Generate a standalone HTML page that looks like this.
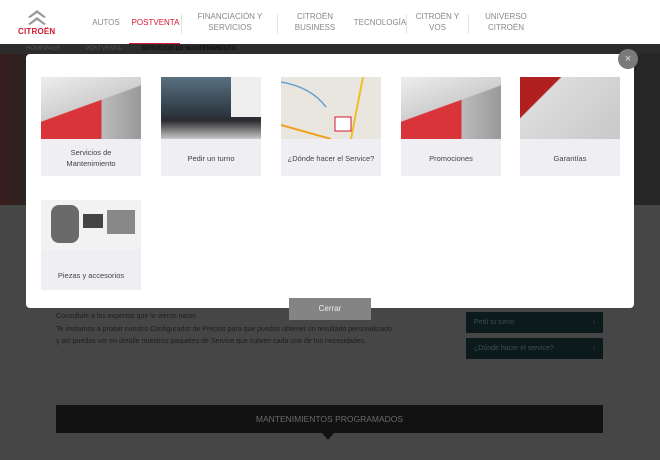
<!DOCTYPE html>
<html><head><meta charset="utf-8"><style>
*{margin:0;padding:0;box-sizing:border-box}
body{width:660px;height:460px;overflow:hidden;background:#464646;font-family:"Liberation Sans",sans-serif;position:relative}
.hdr{position:absolute;left:0;top:0;width:660px;height:44px;background:#fff}
.nav{position:absolute;top:0;height:44px;font-size:8px;color:#888;display:flex;align-items:center;justify-content:center;text-align:center;line-height:11px}
.sep{position:absolute;top:14px;width:1px;height:20px;background:#e4e4e4}
.bc{position:absolute;left:0;top:44px;width:660px;height:10px;background:#2c2c2c;font-size:6px;color:#555;line-height:10px}
.hero{position:absolute;left:0;top:54px;width:660px;height:151px;background:linear-gradient(90deg,#3a1c1c 0,#2a2424 30px,#262626 100%)}
.modal{position:absolute;left:26px;top:54px;width:608px;height:254px;background:#fff;border-radius:4px}
.x{position:absolute;left:618px;top:49px;width:20px;height:20px;border-radius:50%;background:#7a7a7a;color:#ddd;font-size:11px;text-align:center;line-height:20px}
.tile{position:absolute;width:100px;background:#efeef2;overflow:hidden}
.img{position:absolute;left:0;top:0;width:100px;height:62px}
.lab{position:absolute;left:0;width:100px;text-align:center;font-size:7.5px;color:#444;line-height:11px}
.cer{position:absolute;left:289px;top:298px;width:82px;height:22px;background:#848484;color:#eee;font-size:8px;text-align:center;line-height:22px}
.txt{position:absolute;left:56px;top:311px;font-size:7px;color:#1e1e1e;line-height:12.5px}
.btn{position:absolute;left:466px;width:137px;height:21px;background:#0c1a1b;color:#3c5050;font-size:7px;line-height:21px;padding-left:8px}
.btn span{position:absolute;right:8px}
.bar{position:absolute;left:56px;top:405px;width:547px;height:28px;background:#121212;color:#6a6a6a;font-size:8.5px;text-align:center;line-height:28px}
.tri{position:absolute;left:322px;top:433px;width:0;height:0;border-left:6px solid transparent;border-right:6px solid transparent;border-top:7px solid #121212}
</style></head><body>
<div class="hdr">
 <svg style="position:absolute;left:26px;top:7px" width="22" height="20" viewBox="0 0 22 20"><path d="M2 10 L11 3 L20 10 L18 11 L11 6 L4 11Z M2 17 L11 10 L20 17 L18 18 L11 13 L4 18Z" fill="#999"/></svg>
 <div style="position:absolute;left:18px;top:27px;font-size:8px;font-weight:bold;color:#d3172e;letter-spacing:.2px">CITROËN</div>
 <div class="nav" style="left:88px;width:36px">AUTOS</div>
 <div class="nav" style="left:133px;width:45px;color:#d3172e">POSTVENTA</div>
 <div style="position:absolute;left:129px;top:43px;width:51px;height:2px;background:#d3172e"></div>
 <div class="sep" style="left:181px"></div>
 <div class="nav" style="left:190px;width:80px">FINANCIACIÓN Y<br>SERVICIOS</div>
 <div class="sep" style="left:277px"></div>
 <div class="nav" style="left:285px;width:60px">CITROËN<br>BUSINESS</div>
 <div class="nav" style="left:352px;width:56px">TECNOLOGÍA</div>
 <div class="sep" style="left:406px"></div>
 <div class="nav" style="left:410px;width:55px">CITROËN Y<br>VOS</div>
 <div class="sep" style="left:468px"></div>
 <div class="nav" style="left:472px;width:68px">UNIVERSO<br>CITROËN</div>
</div>
<div class="bc"><span style="margin-left:26px">HOMEPAGE</span><span style="margin-left:25px">POSTVENTA</span><span style="margin-left:20px;color:#111;font-weight:bold">SERVICIOS DE MANTENIMIENTO</span></div>
<div class="hero"></div>
<div class="txt">Consultale a los expertos que lo vieron nacer.<br>Te invitamos a probar nuestro Configurador de Precios para que puedas obtener un resultado personalizado<br>y así puedas ver en detalle nuestros paquetes de Service que cubren cada una de tus necesidades.</div>
<div class="btn" style="top:312px">Pedí tu turno<span>›</span></div>
<div class="btn" style="top:338px">¿Dónde hacer el service?<span>›</span></div>
<div class="bar">MANTENIMIENTOS PROGRAMADOS</div>
<div class="tri"></div>
<div class="modal">
 <div class="tile" style="left:15px;top:23px;height:99px"><div class="img" style="background:linear-gradient(160deg,#eee 0,#cfcfcf 45%,transparent 46%),linear-gradient(90deg,#d9343a 0,#d9343a 60%,#bbb 61%,#999)"></div><div class="lab" style="top:70px">Servicios de<br>Mantenimiento</div></div>
 <div class="tile" style="left:135px;top:23px;height:99px"><div class="img" style="background:linear-gradient(180deg,#5a7080 0,#33414c 50%,#2a2a30 70%,#c8c8c8 100%)"></div><div style="position:absolute;left:70px;top:0;width:30px;height:40px;background:#eee"></div><div class="lab" style="top:76px">Pedir un turno</div></div>
 <div class="tile" style="left:255px;top:23px;height:99px"><div class="img" style="background:#e8e6df"></div><svg style="position:absolute;left:0;top:0" width="100" height="62"><path d="M0 48 L50 62" stroke="#f0a020" stroke-width="2"/><path d="M82 0 L70 62" stroke="#f0c020" stroke-width="2"/><path d="M0 5 Q30 10 45 30" stroke="#6aa0d0" stroke-width="1.5" fill="none"/><rect x="54" y="40" width="16" height="14" fill="#fff" stroke="#d3172e"/></svg><div class="lab" style="top:76px">¿Dónde hacer el Service?</div></div>
 <div class="tile" style="left:375px;top:23px;height:99px"><div class="img" style="background:linear-gradient(160deg,#eee 0,#cfcfcf 45%,transparent 46%),linear-gradient(90deg,#d9343a 0,#d9343a 60%,#bbb 61%,#999)"></div><div class="lab" style="top:76px">Promociones</div></div>
 <div class="tile" style="left:494px;top:23px;height:99px"><div class="img" style="background:linear-gradient(135deg,#b02020 0,#b02020 25%,#dcdcdc 26%,#c8c8c8 100%)"></div><div class="lab" style="top:76px">Garantías</div></div>
 <div class="tile" style="left:15px;top:146px;height:90px"><div class="img" style="height:50px;background:#f2f2f2"></div><div style="position:absolute;left:10px;top:5px;width:28px;height:38px;border-radius:8px;background:#6a6a6a"></div><div style="position:absolute;left:42px;top:14px;width:20px;height:14px;background:#444"></div><div style="position:absolute;left:66px;top:10px;width:28px;height:24px;background:#888"></div><div class="lab" style="top:70px">Piezas y accesorios</div></div>
</div>
<div class="x">×</div>
<div class="cer">Cerrar</div>
</body></html>
